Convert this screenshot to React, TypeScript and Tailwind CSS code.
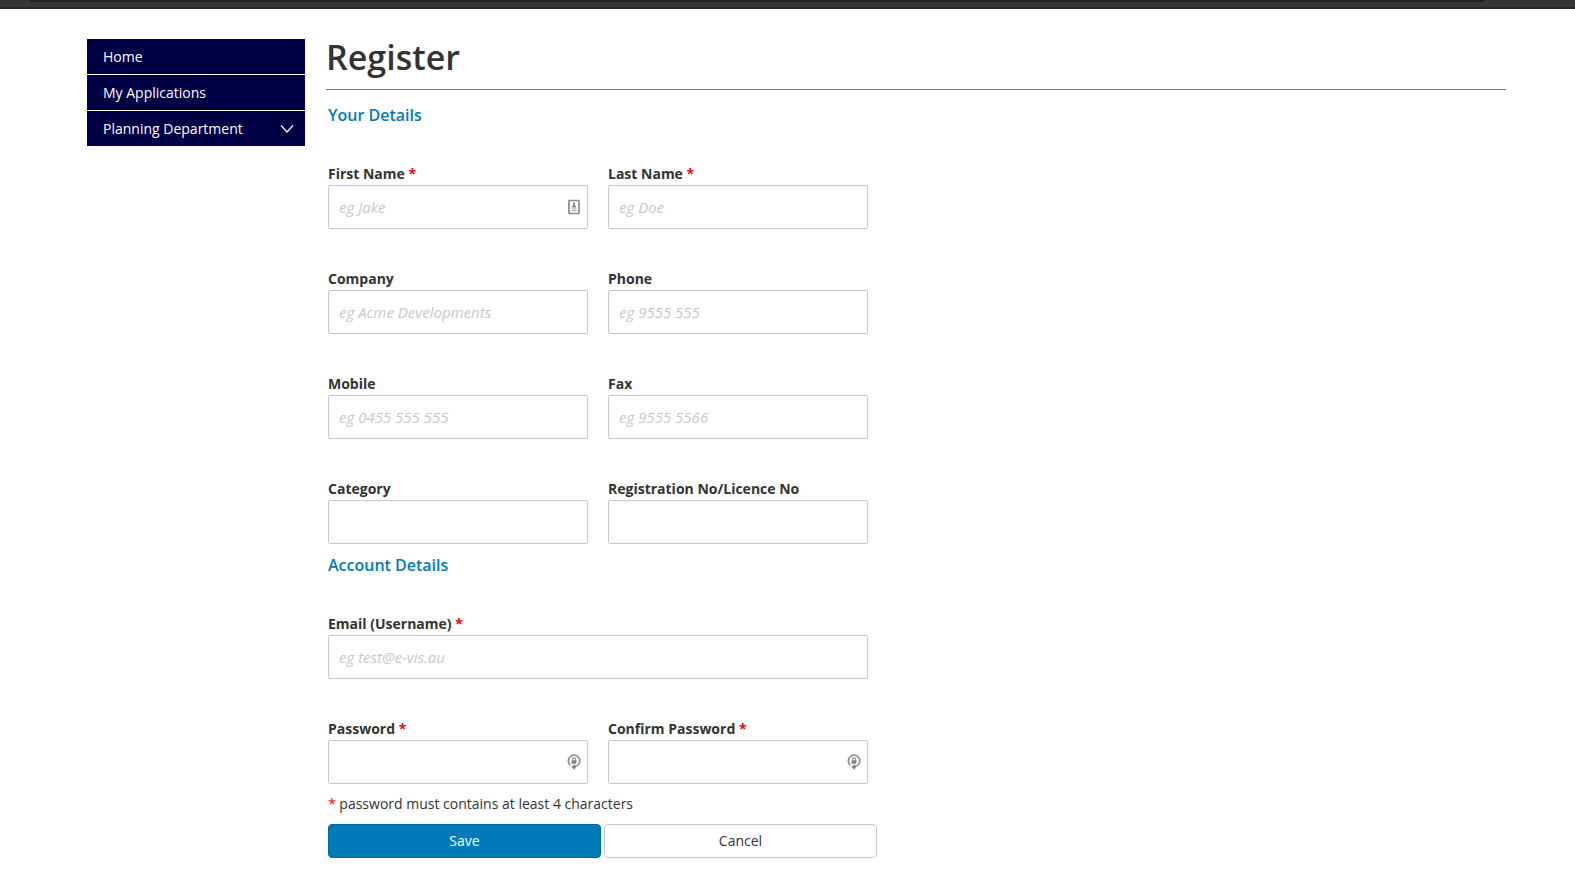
import React, { useState } from 'react';

const ContactIcon = () => (
    <svg width="12" height="16" viewBox="0 0 12 16" fill="none" aria-hidden="true">
        <rect x="1" y="1.5" width="10" height="13" rx="0.5" stroke="#8c8c8c" strokeWidth="1.7" />
        <circle cx="6" cy="4.6" r="1.1" fill="#858585" />
        <path d="M5.3 5.5h1.4l1.6 3H3.7z" fill="#858585" />
        <path d="M3.5 9.8h5M3.5 11.7h5" stroke="#bbb" strokeWidth="1.2" />
    </svg>
);

const LockIcon = () => (
    <svg width="14" height="18" viewBox="0 0 14 18" fill="none" aria-hidden="true">
        <path d="M3.4 12.1A5.7 5.7 0 1 1 8 13.4" stroke="#8f8f8f" strokeWidth="1.7" />
        <path d="M5.4 7.5V6.2a1.6 1.6 0 0 1 3.2 0v1.3" stroke="#8f8f8f" strokeWidth="1.1" />
        <rect x="4.6" y="7.2" width="4.8" height="3.6" fill="#858585" />
        <path d="M4.4 13.8l3.4-2.3v1.3h1v2h-1v2.3z" fill="#777" />
    </svg>
);

const ChevronIcon = () => (
    <svg width="14" height="10" viewBox="0 0 14 10" fill="none" aria-hidden="true">
        <path d="M1 1.5l6 6.5 6-6.5" stroke="#fff" strokeWidth="1.2" />
    </svg>
);

const Field = ({ id, label, required, type = 'text', placeholder, icon, wide, value, onChange }: any) => (
    <div className={wide ? 'col-span-2' : ''}>
        <label htmlFor={id} className="block pb-[2px] text-sm leading-[18px] font-bold">
            {label} {required && <span className="text-[#f00]">*</span>}
        </label>
        <div className="relative">
            <input
                id={id}
                type={type}
                placeholder={placeholder}
                value={value || ''}
                onChange={onChange}
                className="block w-full h-11 px-[10px] text-[15px] bg-white border border-[#c8c8c8] rounded-xs outline-none focus:border-[#007ab8] placeholder:italic placeholder:text-[#c8c8c8]"
            />
            {icon && <span className="absolute right-[7px] inset-y-0 w-[14px] flex items-center justify-center">{icon}</span>}
        </div>
    </div>
);

const navItems = [
    { title: 'Home' },
    { title: 'My Applications' },
    { title: 'Planning Department', hasMenu: true },
];

const detailFields = [
    { id: 'firstName', label: 'First Name', required: true, placeholder: 'eg Jake', icon: <ContactIcon /> },
    { id: 'lastName', label: 'Last Name', required: true, placeholder: 'eg Doe' },
    { id: 'company', label: 'Company', placeholder: 'eg Acme Developments' },
    { id: 'phone', label: 'Phone', placeholder: 'eg 9555 555' },
    { id: 'mobile', label: 'Mobile', placeholder: 'eg 0455 555 555' },
    { id: 'fax', label: 'Fax', placeholder: 'eg 9555 5566' },
    { id: 'category', label: 'Category' },
    { id: 'licenceNo', label: 'Registration No/Licence No' },
];

const accountFields = [
    { id: 'email', label: 'Email (Username)', required: true, type: 'email', placeholder: 'eg test@e-vis.au', wide: true },
    { id: 'password', label: 'Password', required: true, type: 'password', icon: <LockIcon /> },
    { id: 'confirmPassword', label: 'Confirm Password', required: true, type: 'password', icon: <LockIcon /> },
];

const App = () => {
    const [form, setForm] = useState<any>({});

    const handleChange = (event: React.ChangeEvent<HTMLInputElement>) => {
        setForm({ ...form, [event.target.id]: event.target.value });
    };

    const renderFields = (fields: any[]) => (
        <div className="grid grid-cols-2 gap-x-5 gap-y-[41px] mt-[41px]">
            {fields.map((field) => (
                <Field key={field.id} {...field} value={form[field.id]} onChange={handleChange} />
            ))}
        </div>
    );

    return (
        <div className="min-h-screen bg-white text-[#333] font-['Open_Sans',sans-serif]">
            <div className="h-[9px] bg-[#35363a] border-b-2 border-[#28292c] pl-[30px] pr-[90px]">
                <div className="h-[2px] bg-[#202124] rounded-b-full"></div>
            </div>

            <div className="flex items-start gap-[21px] pt-[30px] pl-[87px] pr-[69px]">
                <nav className="w-[218px] shrink-0 flex flex-col gap-px">
                    {navItems.map((item) => (
                        <a
                            key={item.title}
                            href="#"
                            className="h-[35px] pl-4 pr-[11px] flex items-center justify-between bg-[#000045] text-white text-sm"
                        >
                            {item.title}
                            {item.hasMenu && <ChevronIcon />}
                        </a>
                    ))}
                </nav>

                <main className="flex-1">
                    <h1 className="h-[51px] border-b border-[#777] text-[34px] leading-9 font-semibold">Register</h1>

                    <form className="mt-1 ml-[2px] max-w-[549px]" onSubmit={(event) => event.preventDefault()}>
                        <section className="max-w-[540px]">
                            <h2 className="pt-3 text-base leading-[18px] font-semibold text-[#007ab8]">Your Details</h2>
                            {renderFields(detailFields)}
                        </section>
                        <section className="max-w-[540px]">
                            <h2 className="pt-3 text-base leading-[18px] font-semibold text-[#007ab8]">Account Details</h2>
                            {renderFields(accountFields)}
                        </section>

                        <p className="mt-[10px] text-sm leading-5">
                            <span className="text-[#f00]">*</span> password must contains at least 4 characters
                        </p>

                        <div className="mt-[10px] grid grid-cols-2 gap-[3px] text-sm">
                            <button type="submit" className="h-[34px] rounded bg-[#007ab8] border border-[#006ba1] text-white">
                                Save
                            </button>
                            <button type="button" className="h-[34px] rounded bg-white border border-[#c8c8c8]" onClick={() => setForm({})}>
                                Cancel
                            </button>
                        </div>
                    </form>
                </main>
            </div>
        </div>
    );
};

export default App;
